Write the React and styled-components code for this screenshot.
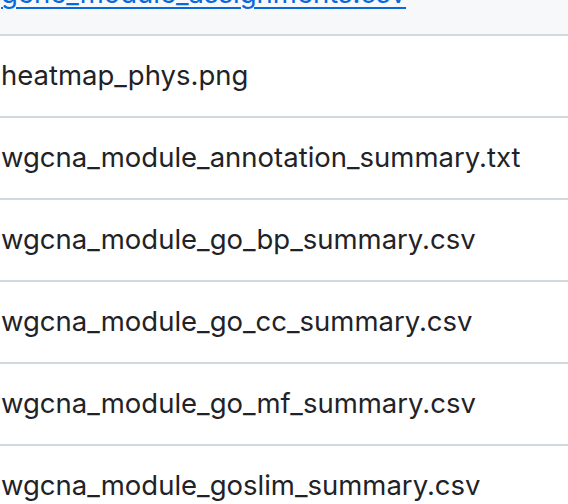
import React from "react"
import styled, { createGlobalStyle } from "styled-components"

const files = [
    { id: 1, name: "gene_module_assignments.csv", hover: true },
    { id: 2, name: "heatmap_phys.png" },
    { id: 3, name: "wgcna_module_annotation_summary.txt" },
    { id: 4, name: "wgcna_module_go_bp_summary.csv" },
    { id: 5, name: "wgcna_module_go_cc_summary.csv" },
    { id: 6, name: "wgcna_module_go_mf_summary.csv" },
    { id: 7, name: "wgcna_module_goslim_summary.csv" }
]

const GlobalStyle = createGlobalStyle`
    html, body {
        margin: 0;
        padding: 0;
        background: #ffffff;
        overflow: hidden;
    }
    body {
        font-family: Inter, "Noto Sans", "Liberation Sans", sans-serif;
        color: #1f2328;
    }
`

const FileList = styled.div`
    display: flex;
    flex-direction: column;
    margin-top: -46px;
`

const FileRow = styled.div`
    height: 80px;
    display: flex;
    align-items: center;
    padding-left: 1px;
    border-bottom: 2px solid #d1d9e0;
    background: ${props => (props.$hover ? "#f6f8fa" : "#ffffff")};
`

const FileName = styled.a`
    font-size: 27.5px;
    line-height: 1;
    white-space: nowrap;
    color: ${props => (props.$hover ? "#0969da" : "#1f2328")};
    text-decoration: ${props => (props.$hover ? "underline" : "none")};
    text-decoration-thickness: 2px;
    text-underline-offset: 4px;
`

const App = () => {
    return (
        <>
            <GlobalStyle />
            <FileList>
                {files.map(file => (
                    <FileRow key={file.id} $hover={file.hover}>
                        <FileName href="#" $hover={file.hover}>{file.name}</FileName>
                    </FileRow>
                ))}
            </FileList>
        </>
    )
}

export default App
